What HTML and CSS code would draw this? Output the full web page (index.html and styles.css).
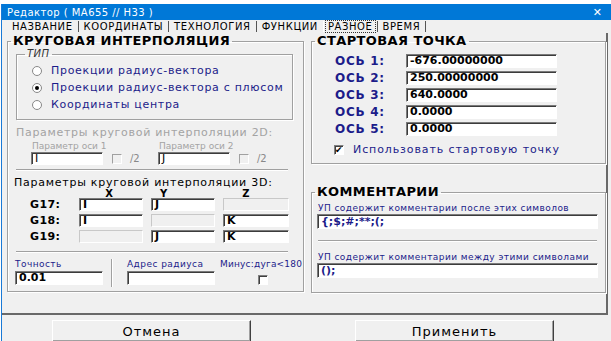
FILE: index.html
```html
<!DOCTYPE html>
<html>
<head>
    <title>Редактор ( МА655 // Н33 )</title>
    <link rel="stylesheet" href="styles.css">
</head>
<body>
<div class="window">
    <div class="titlebar">
        <span class="title">Редактор ( МА655 // Н33 )</span>
        <span class="close">✕</span>
    </div>
    <div class="tabs">
        <span class="tab">НАЗВАНИЕ</span>
        <span class="tab">КООРДИНАТЫ</span>
        <span class="tab">ТЕХНОЛОГИЯ</span>
        <span class="tab nosep">ФУНКЦИИ</span>
        <span class="tab active"><span class="focus">РАЗНОЕ</span></span>
        <span class="tab">ВРЕМЯ</span>
    </div>

    <div class="page">
        <fieldset class="group left">
            <legend>КРУГОВАЯ ИНТЕРПОЛЯЦИЯ</legend>

            <fieldset class="type">
                <legend>ТИП</legend>
                <div class="radio"><span class="circle"></span>Проекции радиус-вектора</div>
                <div class="radio"><span class="circle on"></span>Проекции радиус-вектора с плюсом</div>
                <div class="radio"><span class="circle"></span>Координаты центра</div>
            </fieldset>

            <div class="title-2d">Параметры круговой интерполяции 2D:</div>
            <div class="params2d">
                <div class="param">
                    <div class="hint">Параметр оси 1</div>
                    <div class="param-row">
                        <span class="edit p2d">I</span>
                        <span class="check off"></span>
                        <span class="half">/2</span>
                    </div>
                </div>
                <div class="param">
                    <div class="hint">Параметр оси 2</div>
                    <div class="param-row">
                        <span class="edit p2d">J</span>
                        <span class="check off"></span>
                        <span class="half">/2</span>
                    </div>
                </div>
            </div>

            <div class="etch"></div>

            <div class="title-3d">Параметры круговой интерполяции 3D:</div>
            <div class="heads">
                <span class="head hx">X</span><span class="head hy">Y</span><span class="head hz">Z</span>
            </div>
            <div class="grid3d">
                <span class="g">G17:</span><span class="edit">I</span><span class="edit">J</span><span class="edit dis"></span>
                <span class="g">G18:</span><span class="edit">I</span><span class="edit dis"></span><span class="edit">K</span>
                <span class="g">G19:</span><span class="edit dis"></span><span class="edit">J</span><span class="edit">K</span>
            </div>

            <div class="etch low"></div>

            <div class="bottom-row">
                <div class="field">
                    <div class="blue-hint">Точность</div>
                    <span class="edit wide">0.01</span>
                </div>
                <div class="vetch"></div>
                <div class="field">
                    <div class="blue-hint">Адрес радиуса</div>
                    <span class="edit wide"></span>
                </div>
                <div class="field minus">
                    <div class="blue-hint">Минус:дуга&lt;180</div>
                    <span class="check"></span>
                </div>
            </div>
        </fieldset>

        <div class="right">
            <fieldset class="group start">
                <legend>СТАРТОВАЯ ТОЧКА</legend>
                <div class="axis first"><span class="axis-name">ОСЬ 1:</span><span class="edit axis-val">-676.00000000</span></div>
                <div class="axis"><span class="axis-name">ОСЬ 2:</span><span class="edit axis-val">250.00000000</span></div>
                <div class="axis"><span class="axis-name">ОСЬ 3:</span><span class="edit axis-val">640.0000</span></div>
                <div class="axis"><span class="axis-name">ОСЬ 4:</span><span class="edit axis-val">0.0000</span></div>
                <div class="axis"><span class="axis-name">ОСЬ 5:</span><span class="edit axis-val">0.0000</span></div>
                <div class="use-start"><span class="check checked">✔</span>Использовать стартовую точку</div>
            </fieldset>

            <fieldset class="group comments">
                <legend>КОММЕНТАРИИ</legend>
                <div class="blue-hint c1">УП содержит комментарии после этих символов</div>
                <span class="edit comment">{;$;#;**;(;</span>
                <div class="etch c-etch"></div>
                <div class="blue-hint c2">УП содержит комментарии между этими символами</div>
                <span class="edit comment">();</span>
            </fieldset>
        </div>
    </div>

    <div class="buttons">
        <button class="btn cancel">Отмена</button>
        <button class="btn apply">Применить</button>
    </div>
</div>
</body>
</html>
```

FILE: styles.css
```css
html, body { margin: 0; background: #fff; height: 100%; overflow: hidden; }
body { font-family: "DejaVu Sans", Verdana, sans-serif; font-size: 11px; color: #000; }

.window { margin: 4px 0 0 1px; border-left: 1px solid #1979d6; background: #f0f0f0; height: 337px; width: 610px; }

.titlebar { height: 16px; background: #0078d7; color: #fff; display: flex; align-items: center; justify-content: space-between; padding: 0 10px 0 5px; }
.title { font-size: 10px; letter-spacing: 0.45px; }
.close { font-size: 11px; }

.tabs { height: 13px; display: flex; align-items: center; padding-left: 5px; font-size: 10px; line-height: 11px; }
.tab { padding: 0 5px; border-right: 1px solid #555; letter-spacing: 0.6px; }
.tab.nosep { border-right: 0; }
.tab.active { padding: 0 2px; border-left: 1px solid #fff; }
.focus { outline: 1px dotted #333; padding: 0 2px; }

.page { height: 279px; width: 599px; padding: 1px 0 0 5px; display: flex; gap: 7px; border-right: 2px solid #696969; border-bottom: 2px solid #696969; }

.group { margin: 0; padding: 0; border: 1px solid #a0a0a0; box-shadow: inset 1px 1px 0 #fff, 1px 1px 0 #fff; box-sizing: border-box; }
.group > legend { font-size: 13px; font-weight: bold; line-height: 14px; padding: 0 2px; margin-left: 3px; letter-spacing: 0.4px; }

.left { width: 297px; height: 258px; }

.type { margin: 1px 10px 0 8px; padding: 3px 0 6px 15px; border: 1px solid #a0a0a0; box-shadow: inset 1px 1px 0 #fff, 1px 1px 0 #fff; }
.type legend { font-size: 10px; font-style: italic; line-height: 10px; padding: 0 2px; margin-left: -7px; color: #333; letter-spacing: 0.5px; }
.radio { height: 17px; display: flex; align-items: center; color: #1c1c8a; letter-spacing: 0.7px; }
.circle { width: 8px; height: 8px; border-radius: 50%; border: 1px solid #888; background: #fff; margin-right: 9px; position: relative; }
.circle.on::after { content: ""; position: absolute; left: 2px; top: 2px; width: 4px; height: 4px; border-radius: 50%; background: #000; }

.title-2d { margin: 6px 0 0 8px; line-height: 14px; color: #a3a3a3; letter-spacing: 0.7px; }
.params2d { display: flex; padding-left: 23px; margin-top: 1px; }
.param { width: 127px; }
.hint { font-size: 9px; line-height: 10px; color: #a3a3a3; padding-left: 1px; margin-bottom: 1px; }
.param-row { display: flex; align-items: center; }
.half { color: #888; font-size: 10px; margin-left: 8px; }

.edit { display: block; box-sizing: border-box; height: 13px; background: #fff; border: 1px solid; border-color: #7a7a7a #fff #fff #7a7a7a; box-shadow: inset 1px 1px 0 #3c3c3c; padding: 0 3px; font-weight: bold; font-size: 11px; line-height: 11px; color: #000; }
.edit.dis { background: #f0f0f0; box-shadow: none; border-color: #c8c8c8 #fff #fff #c8c8c8; }
.p2d { width: 72px; font-weight: normal; }
.check { display: inline-block; box-sizing: border-box; width: 10px; height: 10px; background: #fff; border: 1px solid; border-color: #808080 #fff #fff #808080; box-shadow: inset 1px 1px 0 #404040; font-size: 9px; line-height: 8px; text-align: center; }
.check.off { background: #f0f0f0; box-shadow: none; border-color: #a0a0a0 #fff #fff #a0a0a0; margin-left: 9px; }
.check.checked { color: #000; font-weight: bold; }

.etch { border-top: 1px solid #a0a0a0; border-bottom: 1px solid #fff; margin: 4px 15px 0 8px; height: 0; }
.etch.low { margin-top: 8px; }

.title-3d { margin: 6px 0 0 6px; line-height: 12px; letter-spacing: 0.75px; }
.heads { display: flex; margin-left: 71px; height: 9px; font-weight: bold; font-size: 10px; line-height: 9px; }
.hx { width: 60px; text-align: center; }
.hy { width: 82px; padding-left: 21px; box-sizing: border-box; }
.hz { width: 66px; text-align: center; margin-left: -8px; }
.grid3d { display: grid; grid-template-columns: 55px 64px 64px 66px; grid-auto-rows: 13px; column-gap: 8px; row-gap: 3px; margin-left: 8px; }
.grid3d .g { font-weight: bold; line-height: 13px; padding-left: 14px; letter-spacing: 0.4px; }

.bottom-row { display: flex; margin: 6px 0 0 7px; }
.field { display: flex; flex-direction: column; }
.blue-hint { font-size: 9px; line-height: 10px; color: #1c1c8a; letter-spacing: 0.45px; }
.field .edit { margin-top: 2px; }
.wide { width: 88px; height: 14px; }
.vetch { width: 0; border-left: 1px solid #a0a0a0; border-right: 1px solid #fff; height: 28px; margin: 0 14px 0 8px; }
.minus { margin-left: 5px; align-items: center; }
.minus .check { margin-top: 6px; margin-left: 4px; }
.minus .blue-hint { letter-spacing: 0.2px; }

.right { display: flex; flex-direction: column; }
.start { width: 295px; height: 130px; }
.axis { display: flex; align-items: center; height: 14px; margin: 0 0 3px 23px; }
.axis.first { margin-top: 6px; }
.axis-name { width: 71px; font-weight: bold; font-size: 12px; color: #1c1c8a; letter-spacing: 0.7px; }
.edit.axis-val { width: 151px; height: 14px; line-height: 12px; }
.use-start { display: flex; align-items: center; margin: 7px 0 0 22px; color: #1c1c8a; letter-spacing: 0.9px; }
.use-start .check { margin-right: 9px; }

.comments { width: 295px; height: 108px; margin-top: 21px; }
.c1 { margin: 4px 0 0 6px; }
.edit.comment { width: 281px; height: 15px; margin: 1px 0 0 5px; color: #1c1c8a; line-height: 13px; }
.c-etch { margin: 11px 8px 0 6px; }
.c2 { margin: 10px 0 0 6px; }

.buttons { display: flex; padding: 5px 0 0 50px; gap: 104px; }
.btn { width: 199px; height: 22px; background: #f0f0f0; border: 1px solid; border-color: #fff #404040 #404040 #fff; box-shadow: inset -1px -1px 0 #a0a0a0; font-family: "DejaVu Sans", Verdana, sans-serif; font-size: 13px; letter-spacing: 1px; padding: 0; }
```
